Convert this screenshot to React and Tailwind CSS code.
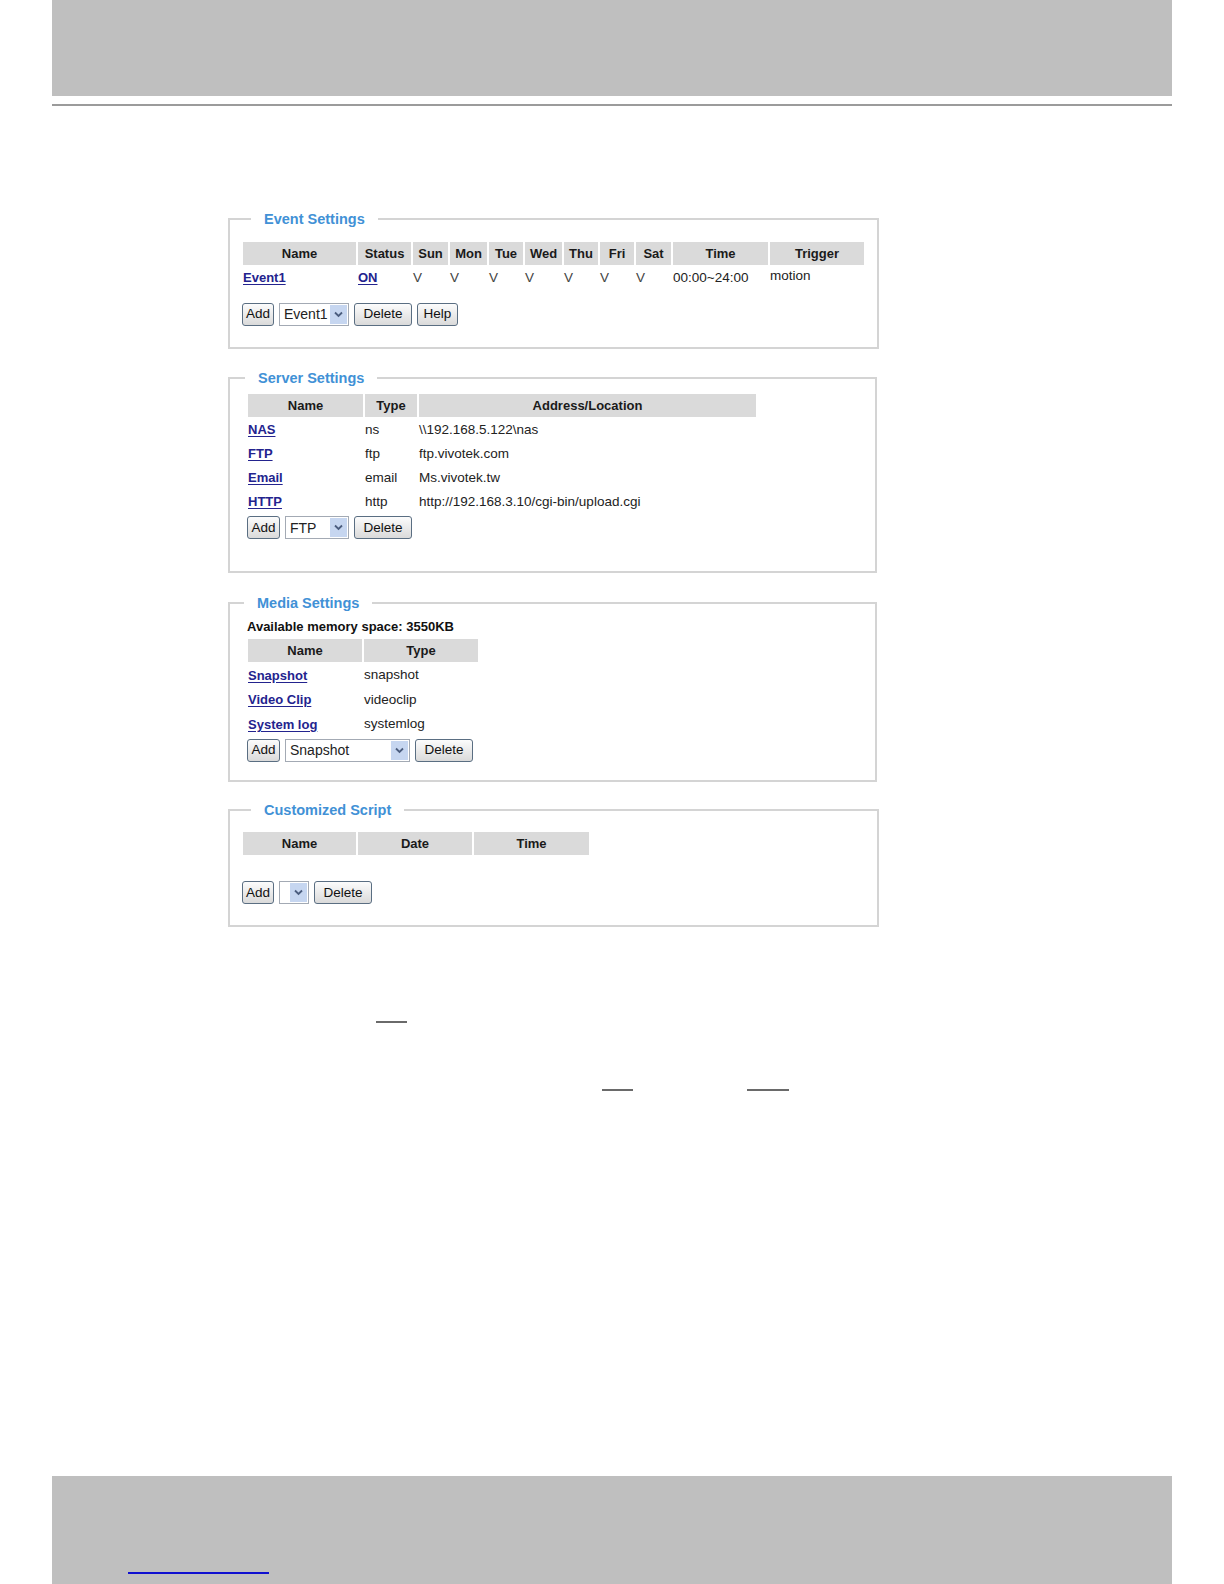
import React from "react";

const Btn = ({ w, children }) => (
  <button
    className={`flex h-[23px] ${w} items-center justify-center rounded-[3px] border border-[#5a6e82] bg-linear-to-b from-[#fcfcfc] to-[#dadada] text-[13.5px] leading-none text-[#111]`}
  >
    {children}
  </button>
);

const Chevron = () => (
  <svg width="9" height="7" viewBox="0 0 9 7">
    <path d="M1 1.5 L4.5 5 L8 1.5" fill="none" stroke="#4b5d7e" strokeWidth="1.8" />
  </svg>
);

const Select = ({ w, value }) => (
  <div className={`flex h-[23px] ${w} items-center border border-[#a3aab4] bg-white`}>
    <span className="flex-1 pl-[4px] text-[14px] leading-none text-[#222]">{value}</span>
    <span className="mr-[1px] flex h-[19px] w-[17px] items-center justify-center bg-[#c6d6f0]">
      <Chevron />
    </span>
  </div>
);

const Legend = ({ ml, children }) => (
  <legend className={`${ml} px-[13px] text-[14.5px] leading-[18px] font-bold text-[#4191d6]`}>
    {children}
  </legend>
);

const Head = ({ w, children }) => (
  <div className={`flex h-[23px] ${w} shrink-0 items-center justify-center bg-[#dadada] text-[13px] font-bold text-[#1a1a1a]`}>
    {children}
  </div>
);

const Cell = ({ w, h = "h-[21.5px]", children }) => (
  <div className={`flex ${h} ${w} shrink-0 items-center text-[13.5px] text-[#222]`}>{children}</div>
);

const LinkCell = ({ w, h = "h-[21.5px]", children }) => (
  <div className={`flex ${h} ${w} shrink-0 items-center`}>
    <span className="text-[13px] font-bold text-[#23238e] underline underline-offset-2">{children}</span>
  </div>
);

export default function App() {
  const days = [
    ["Sun", "w-[35px]"],
    ["Mon", "w-[37px]"],
    ["Tue", "w-[34px]"],
    ["Wed", "w-[37px]"],
    ["Thu", "w-[34px]"],
    ["Fri", "w-[34px]"],
    ["Sat", "w-[35px]"],
  ];
  const servers = [
    ["NAS", "ns", "\\\\192.168.5.122\\nas"],
    ["FTP", "ftp", "ftp.vivotek.com"],
    ["Email", "email", "Ms.vivotek.tw"],
    ["HTTP", "http", "http://192.168.3.10/cgi-bin/upload.cgi"],
  ];
  const media = [
    ["Snapshot", "snapshot"],
    ["Video Clip", "videoclip"],
    ["System log", "systemlog"],
  ];

  return (
    <div className="flex h-[1584px] w-[1224px] flex-col bg-white font-['Liberation_Sans',Arial,sans-serif]">
      {/* top band */}
      <div className="mx-[52px] h-[96px] shrink-0 bg-[#bfbfbf]" />
      <div className="mx-[52px] mt-[8px] h-[2px] shrink-0 bg-[#9b9b9b]" />

      <div className="ml-[228px] mt-[104px] flex flex-col">
        {/* Event Settings */}
        <fieldset className="h-[139px] w-[651px] min-w-0 border-2 border-[#d4d4d4]">
          <Legend ml="ml-[21px]">Event Settings</Legend>
          <div className="ml-[13px] mt-[14px] flex flex-col gap-[2px]">
            <div className="flex gap-[2px]">
              <Head w="w-[113px]">Name</Head>
              <Head w="w-[53px]">Status</Head>
              {days.map(([d, w]) => (
                <Head key={d} w={w}>
                  {d}
                </Head>
              ))}
              <Head w="w-[95px]">Time</Head>
              <Head w="w-[94px]">Trigger</Head>
            </div>
            <div className="flex gap-[2px]">
              <LinkCell w="w-[113px]">Event1</LinkCell>
              <LinkCell w="w-[53px]">ON</LinkCell>
              {days.map(([d, w]) => (
                <Cell key={d} w={w}>
                  <span className="text-[#444]">V</span>
                </Cell>
              ))}
              <Cell w="w-[95px]">00:00~24:00</Cell>
              <Cell w="w-[94px]">
                <span className="-translate-y-[2px]">motion</span>
              </Cell>
            </div>
          </div>
          <div className="ml-[12px] mt-[14px] flex items-center gap-[5px]">
            <Btn w="w-[32px]">Add</Btn>
            <Select w="w-[70px]" value="Event1" />
            <Btn w="w-[58px]">Delete</Btn>
            <Btn w="w-[41px]">Help</Btn>
          </div>
        </fieldset>

        {/* Server Settings */}
        <fieldset className="mt-[20px] h-[204px] w-[649px] min-w-0 border-2 border-[#d4d4d4]">
          <Legend ml="ml-[15px]">Server Settings</Legend>
          <div className="ml-[18px] mt-[7px] flex flex-col gap-[2px]">
            <div className="flex gap-[2px]">
              <Head w="w-[115px]">Name</Head>
              <Head w="w-[52px]">Type</Head>
              <Head w="w-[337px]">Address/Location</Head>
            </div>
            {servers.map(([n, t, a]) => (
              <div key={n} className="flex gap-[2px]">
                <LinkCell w="w-[115px]" h="h-[22px]">{n}</LinkCell>
                <Cell w="w-[52px]" h="h-[22px]">{t}</Cell>
                <Cell w="w-[337px]" h="h-[22px]">{a}</Cell>
              </div>
            ))}
          </div>
          <div className="ml-[17px] mt-[3px] flex items-center gap-[5px]">
            <Btn w="w-[33px]">Add</Btn>
            <Select w="w-[64px]" value="FTP" />
            <Btn w="w-[58px]">Delete</Btn>
          </div>
        </fieldset>

        {/* Media Settings */}
        <fieldset className="mt-[21px] h-[188px] w-[649px] min-w-0 border-2 border-[#d4d4d4]">
          <Legend ml="ml-[14px]">Media Settings</Legend>
          <div className="ml-[17px] mt-[6px] text-[13px] leading-[18px] font-bold text-[#111]">
            Available memory space: 3550KB
          </div>
          <div className="ml-[18px] mt-[3px] flex flex-col gap-[2px]">
            <div className="flex gap-[2px]">
              <Head w="w-[114px]">Name</Head>
              <Head w="w-[114px]">Type</Head>
            </div>
            {media.map(([n, t]) => (
              <div key={n} className="flex gap-[2px]">
                <LinkCell w="w-[114px]" h="h-[22.5px]">{n}</LinkCell>
                <Cell w="w-[114px]" h="h-[22.5px]">{t}</Cell>
              </div>
            ))}
          </div>
          <div className="ml-[17px] mt-[3px] flex items-center gap-[5px]">
            <Btn w="w-[33px]">Add</Btn>
            <Select w="w-[125px]" value="Snapshot" />
            <Btn w="w-[58px]">Delete</Btn>
          </div>
        </fieldset>

        {/* Customized Script */}
        <fieldset className="mt-[19px] h-[126px] w-[651px] min-w-0 border-2 border-[#d4d4d4]">
          <Legend ml="ml-[21px]">Customized Script</Legend>
          <div className="ml-[13px] mt-[13px] flex gap-[2px]">
            <Head w="w-[113px]">Name</Head>
            <Head w="w-[114px]">Date</Head>
            <Head w="w-[115px]">Time</Head>
          </div>
          <div className="ml-[12px] mt-[26px] flex items-center gap-[5px]">
            <Btn w="w-[32px]">Add</Btn>
            <Select w="w-[30px]" value="" />
            <Btn w="w-[58px]">Delete</Btn>
          </div>
        </fieldset>
      </div>

      {/* stray underline marks */}
      <div className="ml-[376px] mt-[94px] h-[2px] w-[31px] shrink-0 bg-[#6a6a6a]" />
      <div className="mt-[66px] flex shrink-0">
        <div className="ml-[602px] h-[2px] w-[31px] bg-[#6a6a6a]" />
        <div className="ml-[114px] h-[2px] w-[42px] bg-[#6a6a6a]" />
      </div>

      {/* bottom band */}
      <div className="mx-[52px] mt-auto h-[108px] shrink-0 bg-[#bfbfbf] pl-[76px] pt-[96px]">
        <div className="h-[2px] w-[141px] bg-[#1010d0]" />
      </div>
    </div>
  );
}
